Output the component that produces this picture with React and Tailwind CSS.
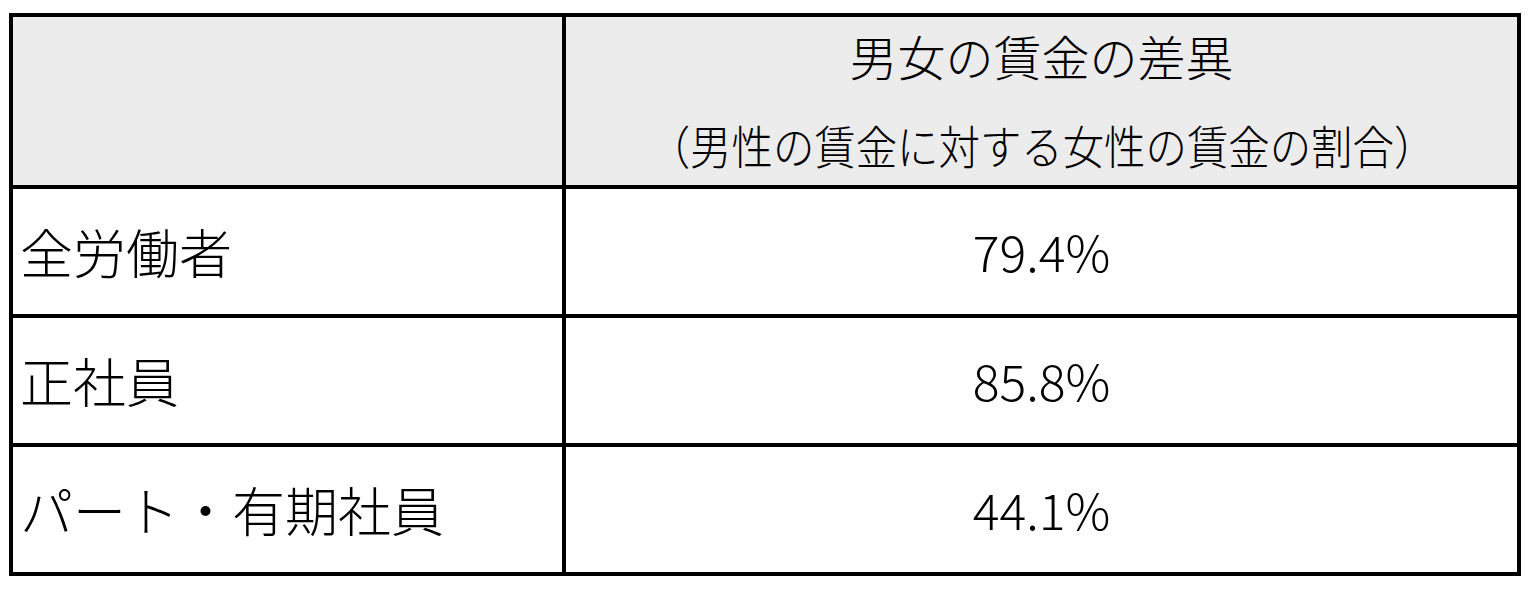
const rows = [
  { label: "全労働者", value: "79.4%" },
  { label: "正社員", value: "85.8%" },
  { label: "パート・有期社員", value: "44.1%" },
];

const App = () => {
  return (
    <div
      className="w-[1536px] h-[589px] bg-white text-black font-light pt-[13px] pl-[9px]"
      style={{ fontFamily: '"Noto Sans CJK JP", "Noto Sans", sans-serif' }}
    >
      <div className="w-[1512px] border-4 border-black">
        {/* header */}
        <div className="flex h-[168px] bg-[#ececec]">
          <div className="w-[549px]" />
          <div className="flex-1 border-l-4 border-black flex flex-col items-center pt-[14px]">
            <div className="text-[48px] leading-[48px]">男女の賃金の差異</div>
            <div className="mt-[42px] text-[46px] leading-[46px] whitespace-nowrap scale-x-[0.9]">
              （男性の賃金に対する女性の賃金の割合）
            </div>
          </div>
        </div>

        {rows.map(({ label, value }) => (
          <div key={label} className="flex h-[129px] border-t-4 border-black">
            <div className="w-[549px] flex items-center pl-[7px] text-[53px] leading-none">
              {label}
            </div>
            <div className="flex-1 border-l-4 border-black flex items-center justify-center text-[50px] leading-none pb-[4px]">
              {value}
            </div>
          </div>
        ))}
      </div>
    </div>
  );
};

export default App;
